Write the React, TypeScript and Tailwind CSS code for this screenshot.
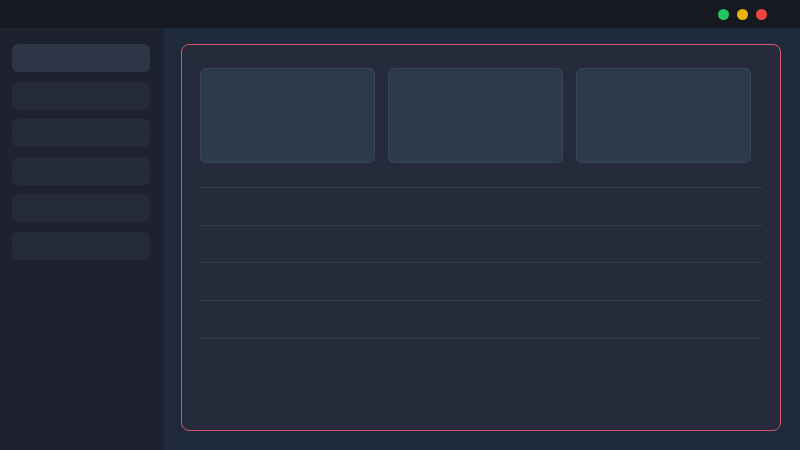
const navItems = [true, false, false, false, false, false]

export default function App() {
  return (
    <div className="flex h-[450px] w-[800px] flex-col overflow-hidden bg-[#1e293c] font-['Liberation_Sans',sans-serif]">
      <div className="flex h-[28px] shrink-0 items-center justify-end gap-[8px] bg-[#16191f] pr-[33px]">
        <span className="h-[11px] w-[11px] rounded-full bg-[#22c55e]" />
        <span className="h-[11px] w-[11px] rounded-full bg-[#eab308]" />
        <span className="h-[11px] w-[11px] rounded-full bg-[#ef4444]" />
      </div>

      <div className="flex flex-1">
        <aside className="flex w-[164px] shrink-0 flex-col gap-[9.6px] bg-[#1d222e] px-3 pt-4">
          {navItems.map((active, i) => (
            <div
              key={i}
              className={
                active
                  ? "h-[28px] w-[138px] rounded-md bg-[#2d3646]"
                  : "h-[28px] w-[138px] rounded-md bg-[#242a38]"
              }
            />
          ))}
        </aside>

        <main className="flex-1 pb-[19px] pl-[17px] pr-[19px] pt-4">
          <div className="h-full rounded-lg border border-[#d9566a] bg-[#252b3a] pl-[18px] pr-[17px] pt-[23px]">
            <div className="grid w-[551px] grid-cols-3 gap-[12.5px]">
              {[0, 1, 2].map((i) => (
                <div key={i} className="h-[95px] rounded-md border border-[#3a4657] bg-[#2d3a4b]" />
              ))}
            </div>

            <div className="mt-[24px]">
              {[0, 1, 2, 3, 4].map((i) => (
                <div key={i} className="h-[37.7px] border-t border-[#343c4c]" />
              ))}
            </div>
          </div>
        </main>
      </div>
    </div>
  )
}
